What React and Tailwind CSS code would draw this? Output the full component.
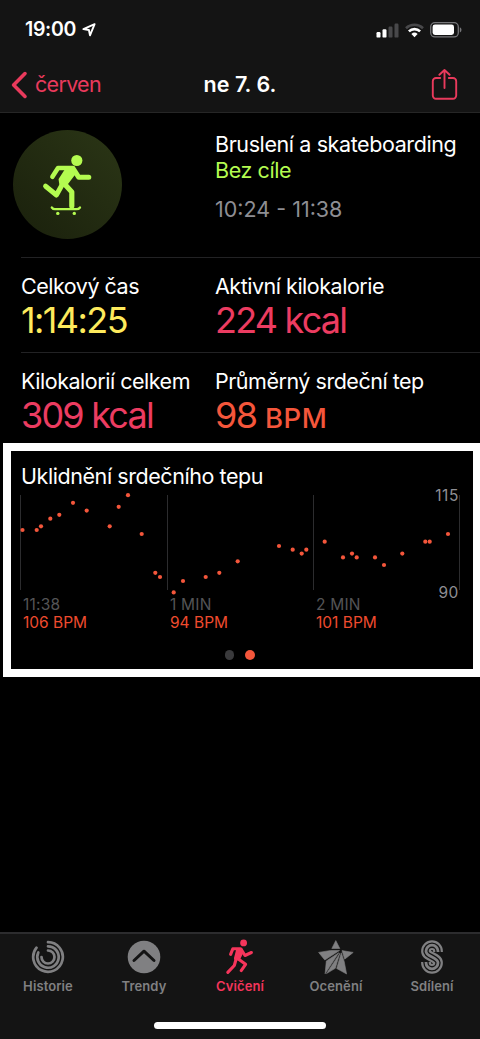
import React from 'react';

const samples = [
  [22.5, 530], [36.7, 530], [41, 526.3], [50.3, 518.7], [59.3, 514.8], [73, 502.8], [86.7, 510.6],
  [109.7, 526.3], [118.7, 506.8], [128, 495.2], [141.7, 534], [155.3, 572.8], [160, 577], [173.7, 592.4],
  [183, 581], [205.7, 577], [219.3, 572.8], [237.7, 561.3], [279, 546], [292.7, 549.7], [301.7, 553.6],
  [306.3, 549.7], [324.7, 541.7], [343, 557.4], [352, 553.6], [356.7, 557.4], [375, 557.4], [384, 565],
  [402.3, 553.6], [425.3, 541.7], [429.7, 541.7], [448, 534],
];

const marks = [
  { time: '11:38', bpm: '106 BPM' },
  { time: '1 MIN', bpm: '94 BPM' },
  { time: '2 MIN', bpm: '101 BPM' },
];

function StatusBar() {
  return (
    <div className="flex h-[58px] items-center justify-between pl-[25px] pr-[18px] pt-[2px] text-white">
      <div className="flex items-center gap-[6px]">
        <span className="text-[19.5px] leading-none font-semibold tracking-[-0.3px]">19:00</span>
        <svg width="14" height="14" viewBox="0 0 14 14" fill="none" stroke="currentColor" strokeWidth="1.9" strokeLinejoin="round">
          <path d="M12.6 1.2 1.4 6.1 6.9 7 8 12.4Z" />
        </svg>
      </div>
      <div className="flex items-center gap-[6px]">
        <svg width="23" height="15" viewBox="0 0 23 15" fill="#fff">
          <rect x="0.5" y="9" width="4" height="5.6" rx="1.2" />
          <rect x="6.5" y="6.3" width="4" height="8.3" rx="1.2" />
          <rect x="12.5" y="3.5" width="4" height="11.1" rx="1.2" fill="#48484a" />
          <rect x="18.5" y="0.5" width="4" height="14.1" rx="1.2" fill="#48484a" />
        </svg>
        <svg width="19" height="15" viewBox="0 0 19 15" fill="none" strokeWidth="2.6">
          <path d="M1 5.2a12.3 12.3 0 0 1 17 0" stroke="#48484a" />
          <path d="M3.9 8.4a8 8 0 0 1 11.2 0" stroke="#fff" />
          <path d="M9.5 14.2 6.4 11a4.5 4.5 0 0 1 6.2 0Z" fill="#fff" />
        </svg>
        <svg width="32" height="16" viewBox="0 0 32 16">
          <rect x="0.7" y="0.7" width="27.6" height="14.2" rx="4.2" fill="none" stroke="#77777a" strokeWidth="1.3" />
          <rect x="2.6" y="2.6" width="21.4" height="10.4" rx="2.4" fill="#fff" />
          <path d="M29.8 5.2v5.2c2.2-.9 2.2-4.3 0-5.2Z" fill="#77777a" />
        </svg>
      </div>
    </div>
  );
}

function NavBar() {
  return (
    <div className="grid h-[54px] grid-cols-3 items-center text-[21.5px] leading-none">
      <div className="flex items-center gap-[7px] pl-[11px] text-[#e93a5c]">
        <svg width="17" height="28" viewBox="0 0 17 28" fill="none" stroke="currentColor" strokeWidth="3.6" strokeLinecap="round" strokeLinejoin="round">
          <path d="M14 2.6 2.6 14 14 25.4" />
        </svg>
        <span className="tracking-[-0.7px]">červen</span>
      </div>
      <div className="text-center font-semibold text-white">ne 7. 6.</div>
      <div className="flex justify-end pr-[22px] text-[#e93a5c]">
        <svg width="27" height="32" viewBox="0 0 27 32" fill="none" stroke="currentColor" strokeWidth="1.9" strokeLinecap="round" strokeLinejoin="round">
          <path d="M9.2 9H5a3.2 3.2 0 0 0-3.2 3.2v14.4A3.2 3.2 0 0 0 5 29.8h17a3.2 3.2 0 0 0 3.2-3.2V12.2A3.2 3.2 0 0 0 22 9h-4.2" />
          <path d="M13.5 19V1M8.4 5.8l5.1-4.8 5.1 4.8" />
        </svg>
      </div>
    </div>
  );
}

function Skater() {
  return (
    <svg width="109" height="109" viewBox="0 0 109 109">
      <defs>
        <linearGradient id="disc" x1="0" y1="1" x2="1" y2="0">
          <stop offset="0" stopColor="#1a200c" />
          <stop offset="1" stopColor="#2b3616" />
        </linearGradient>
      </defs>
      <circle cx="54.5" cy="54.5" r="54.5" fill="url(#disc)" />
      <g fill="none" stroke="#b4fb50" strokeLinecap="round" strokeLinejoin="round">
        <circle cx="63.8" cy="30.5" r="5.6" fill="#b4fb50" stroke="none" />
        <path d="M39.4 46.8 45 38H59.5" strokeWidth="4.6" />
        <path d="M60 38.4 65.8 47.3H75.8" strokeWidth="5" />
        <path d="M53.5 39 60 39 61.5 43.5 53.5 54 47.5 54 46.8 49.5Z" fill="#b4fb50" strokeWidth="2.4" />
        <path d="M32.6 56.2 43.4 65 49 55" strokeWidth="5" />
        <path d="M51.3 53.8 58.8 62V76" strokeWidth="5.2" />
        <path d="M38.8 77.5Q40 79.2 42 79.2H63.5Q65.8 79.2 67 77.5" strokeWidth="2.3" />
      </g>
      <circle cx="44.8" cy="83.4" r="1.7" fill="#b4fb50" />
      <circle cx="61.3" cy="83.4" r="1.7" fill="#b4fb50" />
    </svg>
  );
}

function Stat({ label, children }) {
  return (
    <div className="pt-[16px]">
      <div className="text-[21.5px] leading-[24px] tracking-[-0.48px] whitespace-nowrap text-white">{label}</div>
      {children}
    </div>
  );
}

function HeartChart() {
  return (
    <section className="ml-[3px] h-[234px] border-y-8 border-l-8 border-r-[7px] border-white bg-black">
      <h2 className="pl-[10px] pt-[12px] text-[21.5px] leading-[26px] tracking-[-0.43px] text-white">Uklidnění srdečního tepu</h2>
      <div className="relative">
        <svg className="block" width="462" height="107" viewBox="11 489 462 107">
          <g stroke="#2c2c2e" strokeWidth="1">
            <path d="M20.5 495v95M167.5 495v95M313.5 495v95M459.5 495v95" />
          </g>
          {samples.map(([x, y]) => (
            <circle key={x} cx={x} cy={y} r="2.1" fill="#f4563b" />
          ))}
        </svg>
        <div className="absolute inset-y-0 right-[14px] flex flex-col justify-between text-right text-[15.5px] leading-[14px] tracking-[0.6px] text-[#8e8e93]">
          <span>115</span>
          <span className="relative top-[4px]">90</span>
        </div>
      </div>
      <div className="grid grid-cols-[147px_146px_1fr] pl-[12px] text-[15.5px] leading-[18px]">
        {marks.map((m) => (
          <div key={m.time}>
            <div className="tracking-[0.2px] text-[#545456]">{m.time}</div>
            <div className="text-[#ee4b2e]">{m.bpm}</div>
          </div>
        ))}
      </div>
      <div className="flex justify-center gap-[11px] pr-[5px] pt-[18px]">
        <span className="size-[9.5px] rounded-full bg-[#3a3a3c]" />
        <span className="size-[9.5px] rounded-full bg-[#f4563b]" />
      </div>
    </section>
  );
}

function HistoryIcon() {
  return (
    <svg width="34" height="34" viewBox="0 0 34 34" fill="none" stroke="currentColor" strokeWidth="2.7" strokeLinecap="round">
      <path d="M17 2.2A14.8 14.8 0 1 1 5.5 7.7" />
      <path d="M17 6.3A10.7 10.7 0 1 1 7.3 12.5" />
      <path d="M17 10.5A6.5 6.5 0 1 1 10.5 17" />
    </svg>
  );
}

function TrendIcon() {
  return (
    <svg width="34" height="34" viewBox="0 0 34 34" fill="none">
      <circle cx="17" cy="17" r="16.3" fill="currentColor" />
      <path d="M7 20.5 17 11.2l10 9.3" stroke="#141414" strokeWidth="3" strokeLinecap="round" strokeLinejoin="round" />
    </svg>
  );
}

function RunIcon() {
  return (
    <svg width="34" height="36" viewBox="0 0 34 36" fill="none" stroke="currentColor" strokeWidth="3.1" strokeLinecap="round" strokeLinejoin="round">
      <circle cx="20.6" cy="3.9" r="3.4" fill="currentColor" stroke="none" />
      <path d="M7.6 15.3 9.8 9.8H17.5" />
      <path d="M18.3 10.5 22 16.5 28.4 13.5" />
      <path d="M14.8 10.5H18L18.8 13.5 15.5 20 12.5 19.5Z" fill="currentColor" />
      <path d="M15 19.8 22.6 25.3 18.2 31.6" />
      <path d="M13 20.5 11.3 26.5 4.8 33.4" />
    </svg>
  );
}

function StarIcon() {
  return (
    <svg width="36" height="35" viewBox="0 0 36 35" fill="currentColor" stroke="currentColor" strokeWidth="0.6" strokeLinejoin="round">
      <path d="M17.8.6 21.8 8.5H13.8Z" />
      <path d="M.6 12.4 12.5 10.5H21.5L6.8 20Z" />
      <path d="M8.3 21 20.8 12.7 7.1 33.8Z" />
      <path d="M21.9 13.2 17.3 28.3 8.5 33.6Z" />
      <path d="M23.3 12.8 26.2 21.5 28.6 34 18.7 28.5Z" />
      <path d="M24 10.6 35.2 12.4 26.7 19.2Z" />
    </svg>
  );
}

function SharingIcon() {
  const d = 'M23 12V11.2A6 6 0 0 0 11 11.2C11 17 23 17 23 22.8A6 6 0 0 1 11 22.8V22';
  return (
    <svg width="34" height="34" viewBox="0 0 34 34" fill="none">
      <path d={d} stroke="currentColor" strokeWidth="9.8" />
      <path d={d} stroke="#141414" strokeWidth="5.4" />
      <path d={d} stroke="currentColor" strokeWidth="2.8" />
    </svg>
  );
}

function Tab({ label, active, children }) {
  return (
    <div className={`flex flex-1 flex-col items-center gap-[2px] ${active ? 'text-[#f5355b]' : 'text-[#808082]'}`}>
      <div className="flex h-[36px] items-center">{children}</div>
      <span className="text-[13px] leading-[18px] font-semibold tracking-[0.1px]">{label}</span>
    </div>
  );
}

export default function App() {
  return (
    <div className="flex h-[1039px] w-[480px] flex-col overflow-hidden bg-black font-['Inter','Liberation_Sans',sans-serif]">
      <header className="h-[113px] border-b border-[#262626] bg-[#141414]">
        <StatusBar />
        <NavBar />
      </header>

      <main className="flex-1">
        <div className="grid h-[144px] grid-cols-[202.5px_1fr] pl-[12.5px]">
          <div className="pt-[17px]">
            <Skater />
          </div>
          <div className="pt-[18px] text-[21.5px] leading-[26px] whitespace-nowrap">
            <div className="tracking-[-0.4px] text-white">Bruslení a skateboarding</div>
            <div className="tracking-[-0.4px] text-[#b4fb50]">Bez cíle</div>
            <div className="mt-[13px] text-[#8e8e93]">10:24 - 11:38</div>
          </div>
        </div>

        <div className="ml-[21px] grid h-[95px] grid-cols-[194px_1fr] border-t border-[#222224]">
          <Stat label="Celkový čas">
            <div className="text-[36px] leading-[44px] tracking-[-1.6px] text-[#fdea5c]">1:14:25</div>
          </Stat>
          <Stat label="Aktivní kilokalorie">
            <div className="text-[36px] leading-[44px] tracking-[-1.8px] text-[#ec3c61]">224 kcal</div>
          </Stat>
        </div>
        <div className="ml-[21px] grid h-[91px] grid-cols-[194px_1fr] border-t border-[#222224]">
          <Stat label="Kilokalorií celkem">
            <div className="text-[36px] leading-[44px] tracking-[-1.8px] text-[#ec3c61]">309 kcal</div>
          </Stat>
          <Stat label="Průměrný srdeční tep">
            <div className="text-[36px] leading-[44px] tracking-[-1.6px] text-[#f4563b]">
              98 <span className="text-[27.5px] font-medium tracking-[0.6px]">BPM</span>
            </div>
          </Stat>
        </div>

        <HeartChart />
      </main>

      <footer className="flex h-[107px] flex-col items-center justify-between border-t-2 border-[#2c2c2e] bg-[#141414] pb-[10px]">
        <nav className="flex w-full pt-[5px]">
          <Tab label="Historie"><HistoryIcon /></Tab>
          <Tab label="Trendy"><TrendIcon /></Tab>
          <Tab label="Cvičení" active><RunIcon /></Tab>
          <Tab label="Ocenění"><StarIcon /></Tab>
          <Tab label="Sdílení"><SharingIcon /></Tab>
        </nav>
        <div className="h-[7px] w-[172px] rounded-full bg-white" />
      </footer>
    </div>
  );
}
